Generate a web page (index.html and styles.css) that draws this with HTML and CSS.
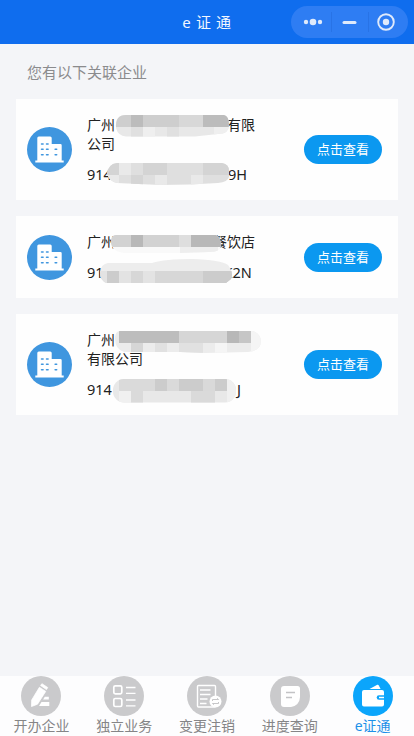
FILE: index.html
```html
<!DOCTYPE html>
<html lang="zh-CN">
<head>
<meta charset="utf-8">
<meta name="viewport" content="width=device-width, initial-scale=1">
<title>e证通</title>
<link rel="stylesheet" href="styles.css">
</head>
<body>
<svg class="defs" width="0" height="0" aria-hidden="true">
  <symbol id="building" viewBox="0 0 45 45">
    <circle cx="22.500" cy="22.500" r="22.500" fill="#3f96df"/>
    <path fill="#fff" d="M10.300 33.500V11q0-1.500 1.500-1.500h11.400q1.500 0 1.500 1.500v6h8.700q1.300 0 1.300 1.300V33.500h2v2H8.300v-2z"/>
    <path stroke="#3f96df" stroke-width="1.500" stroke-linecap="round" d="M14.500 17h1.600m3.400 0h1.600M14.500 22.300h1.600m3.400 0h1.600m7 0h1.600M14.500 27.700h1.600m3.400 0h1.600m7 0h1.600"/>
  </symbol>
</svg>
<div class="app">
  <header class="header">
    <h1 class="title">e 证 通</h1>
    <svg class="capsule" width="117" height="32" viewBox="0 0 117 32">
      <rect width="117" height="32" rx="16" fill="#2e7df3"/>
      <path d="M40.500 6v20M77.500 6v20" stroke="#2873e6"/>
      <g fill="#dfeafb"><circle cx="15" cy="16" r="2.200"/><circle cx="22" cy="16" r="3.300"/><circle cx="29" cy="16" r="2.200"/><rect x="51.500" y="15" width="14" height="3" rx="1.500"/><circle cx="95" cy="16" r="3.200"/></g>
      <circle cx="95" cy="16" r="7.800" fill="none" stroke="#dfeafb" stroke-width="1.900"/>
    </svg>
  </header>
  <main class="main">
    <p class="hint">您有以下关联企业</p>

    <section class="card">
      <svg class="logo"><use href="#building"/></svg>
      <div class="info">
        <p class="name">广州<span class="gap gap-a"></span>有限<br>公司</p>
        <p class="code">914<span class="gap gap-b"></span>9H</p>
      </div>
      <button class="view">点击查看</button>
      <svg class="mask" viewBox="16 99 382 101">
        <clipPath id="a1"><path d="M126 115H224Q229 116 229 125Q229 134 218 134L195 136.500H126Q118 136 116 128Q115 115 126 115Z"/></clipPath>
        <g clip-path="url(#a1)"><path fill="#e8e8e8" d="M114 114h116v24H114z"/><path fill="#cecece" d="M114 114h90v13h-90z"/><path fill="#bcbcbc" d="M131 114h12v13h-12zM203 114h27v13h-27z"/><path fill="#d8d8d8" d="M179 114h24v13h-24z"/><path fill="#e0e0e0" d="M131 127h12v11h-12zM167 127h12v11h-12z"/><path fill="#efefef" d="M143 127h12v11h-12zM214 127h16v11h-16z"/></g>
        <clipPath id="a2"><path d="M117 163H222Q229 164 229 171V177Q228 182 218 183L190 184.500L160 185L117 183Q110 182 107 174Q108 164 117 163Z"/></clipPath>
        <g clip-path="url(#a2)"><path fill="#dfdfdf" d="M106 162h125v24H106z"/><path fill="#d4d4d4" d="M106 162h13v13h-13zM143 162h24v13h-24zM203 162h27v13h-27z"/><path fill="#e9e9e9" d="M119 162h12v13h-12zM106 175h13v12h-13zM155 175h12v12h-12zM191 175h12v12h-12z"/><path fill="#d5d5d5" d="M131 175h12v12h-12z"/></g>
      </svg>
    </section>

    <section class="card card-short">
      <svg class="logo"><use href="#building"/></svg>
      <div class="info">
        <p class="name">广州<span class="gap gap-c"></span>餐饮店</p>
        <p class="code">91<span class="gap gap-d"></span>K2N</p>
      </div>
      <button class="view">点击查看</button>
      <svg class="mask" viewBox="16 216 382 82">
        <clipPath id="b1"><path d="M116 235H216Q221 237 221 246Q220 252 210 252L180 253H124Q110 251 111 240Q112 235 116 235Z"/></clipPath>
        <g clip-path="url(#b1)"><path fill="#f9f9f9" d="M110 234h112v20H110z"/><path fill="#eee" d="M180 247h38v7h-38z"/><path fill="#d2d2d2" d="M110 234h81v13h-81z"/><path fill="#b8b8b8" d="M131 234h12v13h-12zM191 234h31v13h-31z"/><path fill="#dedede" d="M179 234h12v13h-12z"/></g>
        <clipPath id="b2"><path d="M108 263H152Q165 259 192 259Q221 260 228 265Q234 273 231 279L226 283H107Q100 281 100 272Q101 264 108 263Z"/></clipPath>
        <g clip-path="url(#b2)"><path fill="#ededed" d="M100 258h134v26H100z"/><path fill="#d7d7d7" d="M100 271h134v13H100z"/><path fill="#ccc" d="M107 271h12v13h-12zM203 271h30v13h-30z"/><path fill="#e3e3e3" d="M100 271h7v13h-7zM119 271h12v13h-12zM143 271h12v13h-12z"/></g>
      </svg>
    </section>

    <section class="card">
      <svg class="logo"><use href="#building"/></svg>
      <div class="info">
        <p class="name">广州<br>有限公司</p>
        <p class="code">914<span class="gap gap-e"></span>J</p>
      </div>
      <button class="view">点击查看</button>
      <svg class="mask" viewBox="16 314 382 101">
        <clipPath id="c1"><path d="M120 331H253Q261 334 261 342Q260 351 248 352L205 353L180 352H124Q115 349 115 339Q115 331 120 331Z"/></clipPath>
        <g clip-path="url(#c1)"><path fill="#ececec" d="M115 330h147v24H115z"/><path fill="#bdbdbd" d="M119 330h60v13h-60z"/><path fill="#d6d6d6" d="M179 330h48v13h-48zM131 343h12v12h-12z"/><path fill="#b8b8b8" d="M227 330h12v13h-12z"/><path fill="#c6c6c6" d="M239 330h12v13h-12z"/><path fill="#f5f5f5" d="M251 330h12v24h-12zM215 343h12v12h-12z"/><path fill="#e1e1e1" d="M155 343h12v12h-12zM179 343h24v12h-24z"/></g>
        <clipPath id="c2"><rect x="113" y="379" width="123" height="23.500" rx="11"/></clipPath>
        <g clip-path="url(#c2)"><path fill="#e8e8e8" d="M113 378h124v26H113z"/><path fill="#dadada" d="M119 378h60v13h-60zM131 391h12v12h-12zM191 391h24v12h-24z"/><path fill="#ccc" d="M155 378h12v13h-12zM179 378h24v13h-24zM215 378h12v13h-12z"/><path fill="#d9d9d9" d="M203 378h12v13h-12z"/><path fill="#f0f0f0" d="M227 378h12v26h-12zM119 391h12v12h-12z"/></g>
      </svg>
    </section>
  </main>

  <nav class="tabs">
    <a class="tab">
      <svg viewBox="0 0 40 40"><circle cx="20" cy="20" r="20" fill="#cacacc"/><path fill="#fff" stroke="#fff" stroke-width=".8" stroke-linejoin="round" d="M19.600 9.500l1.300-1.800 5.800 3.800-1.200 2.100zM18.400 11.300l6.300 4.100-8.200 12.800-6 2.300.2-6.500z"/><path fill="#fff" d="M23.800 20.800h4v2.800h-5.700zM20.500 26h7.800v3.900H18z"/></svg>
      <span>开办企业</span>
    </a>
    <a class="tab">
      <svg viewBox="0 0 40 40"><circle cx="20" cy="20" r="20" fill="#cacacc"/><g fill="none" stroke="#fff" stroke-width="1.700"><rect x="9.800" y="9.800" width="8" height="8" rx="1.500"/><rect x="9.800" y="22.500" width="8" height="8" rx="1.500"/><path stroke-width="1.300" d="M22 11.500h9.500M22 17.300h9.500M22 24h9.500M22 29.800h9.500"/></g></svg>
      <span>独立业务</span>
    </a>
    <a class="tab">
      <svg viewBox="0 0 40 40"><circle cx="20" cy="20" r="20" fill="#cacacc"/><rect x="10.500" y="9.500" width="18" height="21.500" rx="1" fill="none" stroke="#fff" stroke-width="1.400"/><path stroke="#fff" stroke-width="1.500" d="M13 14h10.500M13 18.500h10.500M13 23h7.500M13 27.500h6.500"/><circle cx="28.500" cy="25.500" r="6" fill="#fff"/><path fill="none" stroke="#b9b9bb" stroke-width=".8" d="M25.500 25v-1.500h6l-1.300-1.300M31.500 26v1.500h-6l1.300 1.300"/></svg>
      <span>变更注销</span>
    </a>
    <a class="tab">
      <svg viewBox="0 0 40 40"><circle cx="20" cy="20" r="20" fill="#cacacc"/><path fill="#fff" d="M14 10h13.500q2.500 0 2.500 2.500v8.500q-.5 8.500-9 10h-7q-3 0-3-3V13q0-3 3-3z"/><path stroke="#c3c3c5" stroke-width="1.300" d="M16 16.500h9M16 21.500h6"/></svg>
      <span>进度查询</span>
    </a>
    <a class="tab tab-active">
      <svg viewBox="0 0 40 40"><circle cx="20" cy="20" r="20" fill="#0ba5fb"/><path fill="#fff" d="M16.500 13l7.800-4.200q1-.4 1.500.6l1.800 3.600zM11 14h18q2 0 2 2v12.500q0 2-2 2H11q-2 0-2-2V16q0-2 2-2z"/><path fill="#0ba5fb" d="M31 19.200h-5q-2.300 0-2.300 2.300t2.300 2.300h5z"/><path stroke="#fff" stroke-width="1.500" d="M26 21.500h5"/></svg>
      <span>e证通</span>
    </a>
  </nav>
</div>
</body>
</html>
```

FILE: styles.css
```css
* { box-sizing: border-box; }

body {
  margin: 0;
  background: #f4f5f8;
  color: #222;
  font-family: "Noto Sans", "Noto Sans CJK SC", sans-serif;
}

h1, p { margin: 0; font-weight: 400; }

.defs { position: absolute; }

.app {
  display: flex;
  flex-direction: column;
  height: 736px;
  overflow: hidden;
}

.header {
  display: grid;
  grid-template-columns: 1fr auto 1fr;
  align-items: center;
  height: 44px;
  padding-right: 6px;
  padding-left: 6px;
  background: #0f6dee;
}

.title {
  grid-column: 2;
  padding-bottom: 1px;
  color: #f2f7ff;
  font-size: 15px;
  line-height: 20px;
  letter-spacing: .6px;
}

.capsule { justify-self: end; }

.main {
  flex: 1;
  display: flex;
  flex-direction: column;
  gap: 16px;
  padding: 18px 16px 0;
}

.hint {
  height: 21px;
  padding-left: 11px;
  color: #8b8b8d;
  font-size: 15px;
  line-height: 20px;
}

.card {
  position: relative;
  display: flex;
  align-items: center;
  height: 101px;
  padding: 0 16px 0 11px;
  background: #fefefe;
}

.card-short { height: 82px; }

.logo { width: 45px; height: 45px; }

.info {
  flex: 1;
  padding-left: 15px;
  font-size: 14px;
  line-height: 19px;
  white-space: nowrap;
}

.code { margin-top: 12px; font-size: 14.500px; }

.gap { display: inline-block; }
.gap-a { width: 112px; }
.gap-b { width: 116px; }
.gap-c { width: 98px; }
.gap-d { width: 120px; }
.gap-e { width: 125px; }

.view {
  width: 78px;
  height: 29px;
  padding: 0;
  border: 0;
  border-radius: 15px;
  background: #0b98f0;
  color: #fff;
  font: inherit;
  font-size: 13px;
  line-height: 29px;
}

.mask {
  position: absolute;
  inset: 0;
  width: 100%;
  height: 100%;
  pointer-events: none;
}

.tabs {
  display: grid;
  grid-template-columns: repeat(5, 1fr);
  height: 60px;
  background: #fdfdfe;
}

.tab {
  display: flex;
  flex-direction: column;
  align-items: center;
  color: #858587;
  font-size: 14px;
  line-height: 20px;
}

.tab svg { width: 40px; height: 40px; }

.tab-active { color: #1c90e8; }
```
